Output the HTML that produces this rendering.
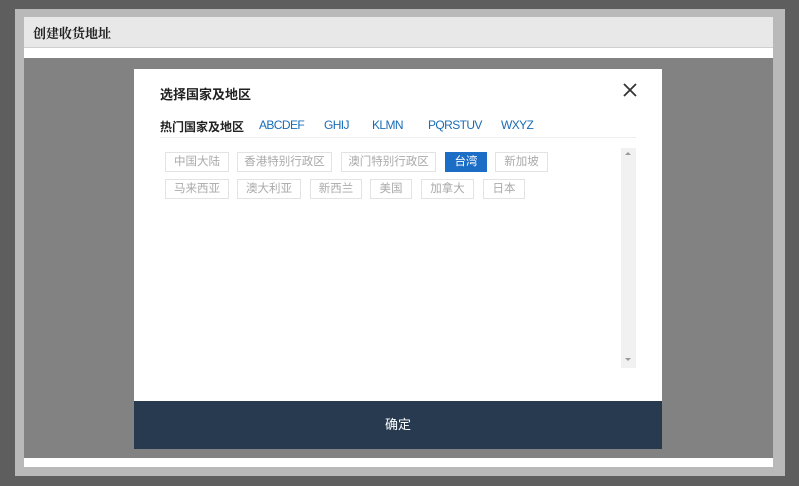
<!DOCTYPE html>
<html><head><meta charset="utf-8"><style>
*{margin:0;padding:0;box-sizing:border-box}
body{width:799px;height:486px;background:#5e5e5e;position:relative;overflow:hidden;font-family:"Liberation Sans","Noto Sans CJK SC",sans-serif}
.abs{position:absolute}
.frame{left:15px;top:9px;width:770px;height:467px;background:#b9b9b9}
.inner{left:24px;top:17px;width:749px;height:450px;background:#fff}
.hdr{left:24px;top:17px;width:749px;height:31px;background:#e8e8e8;border-bottom:1px solid #cfcfcf;font-family:"Noto Serif CJK SC","Noto Serif CJK JP","Liberation Serif",serif;font-weight:bold;font-size:13px;color:#222;line-height:31px;padding-left:9px}
.gray{left:24px;top:58px;width:749px;height:400px;background:#828282}
.modal{left:134px;top:69px;width:528px;height:380px;background:#fff}
.title{left:160px;top:84px;font-size:13px;font-weight:bold;color:#222}
.close{left:620px;top:80px;width:20px;height:20px}
.tabs{top:118px;font-size:12px}
.tab{position:absolute;color:#1a6cb8;white-space:nowrap;letter-spacing:-0.6px}
.line{left:160px;top:137px;width:476px;height:1px;background:#eee}
.btn{position:absolute;height:20px;border:1px solid #e3e3e3;font-size:11.5px;color:#aaa;line-height:18px;text-align:center;white-space:nowrap}
.sel{background:#1b6dc5;border-color:#1b6dc5;color:#fff}
.scroll{left:621px;top:148px;width:15px;height:220px;background:#f1f1f1}
.foot{left:134px;top:401px;width:528px;height:48px;background:#273a50;color:#fff;font-size:13px;text-align:center;line-height:48px}
</style></head><body>
<div class="abs frame"></div>
<div class="abs inner"></div>
<div class="abs hdr">创建收货地址</div>
<div class="abs gray"></div>
<div class="abs modal"></div>
<div class="abs title">选择国家及地区</div>
<svg class="abs close" viewBox="0 0 20 20"><path d="M4 4L16 16M16 4L4 16" stroke="#333" stroke-width="1.8"/></svg>
<div class="abs tabs" style="left:0">
<span class="tab" style="left:160px;color:#222;font-weight:bold;letter-spacing:0">热门国家及地区</span>
<span class="tab" style="left:259px">ABCDEF</span>
<span class="tab" style="left:324px">GHIJ</span>
<span class="tab" style="left:372px">KLMN</span>
<span class="tab" style="left:428px">PQRSTUV</span>
<span class="tab" style="left:501px">WXYZ</span>
</div>
<div class="abs line"></div>
<div class="btn" style="left:165px;top:152px;width:64px">中国大陆</div>
<div class="btn" style="left:237px;top:152px;width:95px">香港特别行政区</div>
<div class="btn" style="left:341px;top:152px;width:95px">澳门特别行政区</div>
<div class="btn sel" style="left:445px;top:152px;width:42px">台湾</div>
<div class="btn" style="left:495px;top:152px;width:53px">新加坡</div>
<div class="btn" style="left:165px;top:179px;width:64px">马来西亚</div>
<div class="btn" style="left:237px;top:179px;width:64px">澳大利亚</div>
<div class="btn" style="left:310px;top:179px;width:52px">新西兰</div>
<div class="btn" style="left:370px;top:179px;width:42px">美国</div>
<div class="btn" style="left:421px;top:179px;width:53px">加拿大</div>
<div class="btn" style="left:483px;top:179px;width:42px">日本</div>
<div class="abs scroll"></div>
<div class="abs" style="left:625px;top:152px;width:0;height:0;border-left:3px solid transparent;border-right:3px solid transparent;border-bottom:3px solid #999"></div>
<div class="abs" style="left:625px;top:358px;width:0;height:0;border-left:3px solid transparent;border-right:3px solid transparent;border-top:3px solid #999"></div>
<div class="abs foot">确定</div>
</body></html>
